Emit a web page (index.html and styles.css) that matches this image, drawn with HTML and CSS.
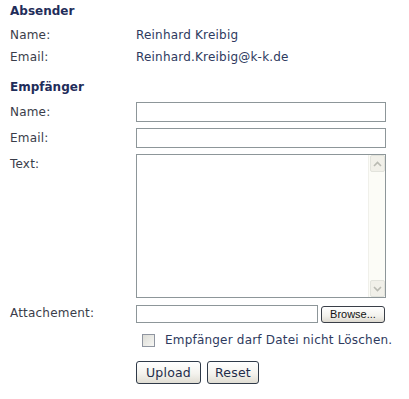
FILE: index.html
```html
<!DOCTYPE html>
<html>
<head>
<meta charset="utf-8">
<link rel="stylesheet" href="styles.css">
</head>
<body>
<div class="page">
  <div class="section-title first">Absender</div>
  <div class="info">
    <div class="info-row"><span class="label">Name:</span><span class="value">Reinhard Kreibig</span></div>
    <div class="info-row"><span class="label">Email:</span><span class="value">Reinhard.Kreibig@k-k.de</span></div>
  </div>
  <div class="section-title second">Empfänger</div>
  <form class="form">
    <div class="form-row">
      <label class="label">Name:</label>
      <input class="text-input" type="text">
    </div>
    <div class="form-row">
      <label class="label">Email:</label>
      <input class="text-input" type="text">
    </div>
    <div class="form-row">
      <label class="label text-label">Text:</label>
      <div class="textarea-wrap">
        <textarea class="textarea"></textarea>
        <div class="scrollbar">
          <div class="sb-btn">
            <svg width="9" height="6" viewBox="0 0 9 6"><path d="M1 5 L4.5 1.5 L8 5" fill="none" stroke="#b9bab2" stroke-width="1.6"/></svg>
          </div>
          <div class="sb-track"></div>
          <div class="sb-btn">
            <svg width="9" height="6" viewBox="0 0 9 6"><path d="M1 1 L4.5 4.5 L8 1" fill="none" stroke="#b9bab2" stroke-width="1.6"/></svg>
          </div>
        </div>
      </div>
    </div>
    <div class="form-row attach-row">
      <label class="label attach-label">Attachement:</label>
      <div class="file-field">
        <input class="file-input" type="text">
        <button type="button" class="browse-btn">Browse...</button>
      </div>
    </div>
    <div class="check-row">
      <span class="checkbox"></span>
      <span class="check-label">Empfänger darf Datei nicht Löschen.</span>
    </div>
    <div class="button-row">
      <button type="button" class="btn btn-upload">Upload</button>
      <button type="button" class="btn btn-reset">Reset</button>
    </div>
  </form>
</div>
</body>
</html>
```

FILE: styles.css
```css
html, body {
  margin: 0;
  padding: 0;
  background: #ffffff;
}

body {
  font-family: "DejaVu Sans", Verdana, sans-serif;
  font-size: 12px;
  letter-spacing: 0.2px;
  color: #3a3d4a;
}

.page {
  padding: 3px 0 0 10px;
}

.section-title {
  font-weight: bold;
  color: #1f2d5a;
  line-height: 16px;
  letter-spacing: 0;
}

.section-title.second {
  margin-top: 11px;
}

.info {
  margin-top: 5px;
}

.info-row {
  display: grid;
  grid-template-columns: 126px auto;
  line-height: 22px;
}

.label {
  color: #3a3d4a;
}

.value {
  color: #2e3a5e;
}

.form {
  margin: 7px 0 0 0;
  display: flex;
  flex-direction: column;
}

.form-row {
  display: grid;
  grid-template-columns: 126px 250px;
  align-items: start;
  margin-bottom: 6px;
}

.form-row .label {
  line-height: 16px;
  padding-top: 2px;
}

.text-input {
  box-sizing: border-box;
  width: 250px;
  height: 20px;
  margin: 0;
  border: 1px solid #8d9699;
  background: #ffffff;
  padding: 0 2px;
  font: inherit;
}

.textarea-wrap {
  position: relative;
  width: 250px;
  height: 144px;
}

.textarea {
  box-sizing: border-box;
  display: block;
  width: 250px;
  height: 144px;
  margin: 0;
  border: 1px solid #8d9699;
  resize: none;
  overflow: hidden;
  font: inherit;
  padding: 2px;
}

.scrollbar {
  position: absolute;
  top: 1px;
  right: 1px;
  bottom: 1px;
  width: 16px;
  display: flex;
  flex-direction: column;
  background: #fcfcf7;
  border-left: 1px solid #f0f0ea;
}

.sb-btn {
  box-sizing: border-box;
  height: 17px;
  margin: 0 0 0 1px;
  width: 15px;
  border: 1px solid #e2e3dc;
  border-radius: 2px;
  background: #f1f0e9;
  display: flex;
  align-items: center;
  justify-content: center;
}

.sb-track {
  flex: 1;
}

.attach-row {
  margin-top: 1px;
  margin-bottom: 0;
}

.form-row .attach-label {
  padding-top: 0;
}

.file-field {
  display: flex;
  align-items: flex-start;
  gap: 3px;
}

.file-input {
  box-sizing: border-box;
  width: 182px;
  height: 18px;
  margin: 0;
  border: 1px solid #8d9699;
  background: #ffffff;
  font: inherit;
}

.browse-btn {
  box-sizing: border-box;
  width: 64px;
  height: 17px;
  margin: 1px 0 0 0;
  padding: 0;
  border: 1px solid #3a3f48;
  border-radius: 3px;
  background: linear-gradient(#ffffff, #f2f1ec 60%, #dedad0);
  font-family: "Liberation Sans", Arial, sans-serif;
  font-size: 11px;
  letter-spacing: 0;
  color: #111111;
  line-height: 15px;
}

.check-row {
  display: flex;
  align-items: center;
  margin: 9px 0 0 132px;
  height: 16px;
}

.checkbox {
  box-sizing: border-box;
  width: 13px;
  height: 13px;
  border: 1px solid #8f95a0;
  background: linear-gradient(135deg, #dcdcd6, #f7f7f4);
  margin-right: 10px;
}

.check-label {
  color: #2e3a5e;
  line-height: 16px;
}

.button-row {
  display: flex;
  gap: 6px;
  margin: 13px 0 0 126px;
}

.btn {
  box-sizing: border-box;
  height: 23px;
  margin: 0;
  padding: 0;
  border: 1px solid #2f3a48;
  border-radius: 3px;
  background: linear-gradient(#ffffff, #f4f3ee 55%, #e0ddd3);
  font-family: "DejaVu Sans", Verdana, sans-serif;
  font-size: 12.5px;
  letter-spacing: 0.2px;
  color: #1f2d4a;
}

.btn-upload {
  width: 65px;
}

.btn-reset {
  width: 52px;
}
```
